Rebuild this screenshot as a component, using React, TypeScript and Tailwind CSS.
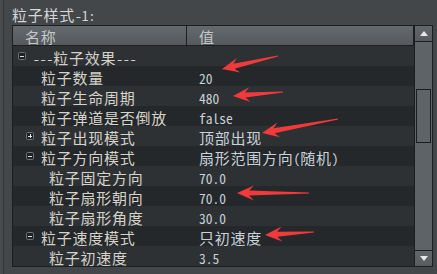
import React from "react";

type Row = { level: 0 | 1 | 2; box?: "+" | "-"; name: string; value: string };

const rows: Row[] = [
  { level: 0, box: "-", name: "---粒子效果---", value: "" },
  { level: 1, name: "粒子数量", value: "20" },
  { level: 1, name: "粒子生命周期", value: "480" },
  { level: 1, name: "粒子弹道是否倒放", value: "false" },
  { level: 1, box: "+", name: "粒子出现模式", value: "顶部出现" },
  { level: 1, box: "-", name: "粒子方向模式", value: "扇形范围方向(随机)" },
  { level: 2, name: "粒子固定方向", value: "70.0" },
  { level: 2, name: "粒子扇形朝向", value: "70.0" },
  { level: 2, name: "粒子扇形角度", value: "30.0" },
  { level: 1, box: "-", name: "粒子速度模式", value: "只初速度" },
  { level: 2, name: "粒子初速度", value: "3.5" },
];

const indent: Record<number, string> = { 0: "w-0", 1: "w-[8px]", 2: "w-[16px]" };

function Mixed({ text }: { text: string }) {
  const parts = text.split(/([\x00-\x7f]+)/).filter((p) => p.length > 0);
  return (
    <>
      {parts.map((p, i) =>
        /^[\x00-\x7f]+$/.test(p) ? (
          <span key={i} className="font-['Noto_Sans_Mono_CJK_SC','DejaVu_Sans_Mono',monospace] text-[13.5px]">
            {p}
          </span>
        ) : (
          <span key={i} className="tracking-[0.75px]">
            {p}
          </span>
        )
      )}
    </>
  );
}

function Box({ kind }: { kind: "+" | "-" }) {
  return (
    <div className="w-[8px] h-[8px] rounded-[1.5px] border border-[#6f7377] bg-[#1f2123] flex items-center justify-center relative">
      <div className="w-[4px] h-[1px] bg-[#e0e0e0]" />
      {kind === "+" && <div className="absolute w-[1px] h-[4px] bg-[#e0e0e0]" />}
    </div>
  );
}

function arrowPoints(tx: number, ty: number, ex: number, ey: number, headLen = 17, headHalf = 7.5, shaftHalf = 2.6, tailHalf = 0.5) {
  const dx = ex - tx;
  const dy = ey - ty;
  const len = Math.hypot(dx, dy);
  const ux = dx / len;
  const uy = dy / len;
  const nx = -uy;
  const ny = ux;
  const p = (a: number, b: number, s: number) => `${(tx + ux * a + nx * b * s).toFixed(1)},${(ty + uy * a + ny * b * s).toFixed(1)}`;
  const pts = [
    `${tx},${ty}`,
    p(headLen, headHalf, 1),
    p(headLen * 0.72, shaftHalf, 1),
    `${(ex + nx * tailHalf).toFixed(1)},${(ey + ny * tailHalf).toFixed(1)}`,
    `${(ex - nx * tailHalf).toFixed(1)},${(ey - ny * tailHalf).toFixed(1)}`,
    p(headLen * 0.72, shaftHalf, -1),
    p(headLen, headHalf, -1),
  ];
  return pts.join(" ");
}

const arrows: [number, number, number, number][] = [
  [222, 69, 278, 56],
  [233, 96, 283, 92],
  [262, 133, 338, 119],
  [237, 193, 309, 193],
  [265, 235, 314, 232],
];

export default function App() {
  return (
    <div className="w-[437px] h-[274px] bg-[#43474a] relative overflow-hidden flex font-['Noto_Sans_CJK_SC','Noto_Sans',sans-serif] text-[15px]">
      <div className="w-[3px] bg-[#474b4e] border-r border-[#35383b] box-content" />
      <div className="flex-1 flex flex-col pl-[8px]">
        <div className="h-[25px] text-[#d4d6d8] leading-[20px] pt-[5px] whitespace-nowrap">
          <Mixed text="粒子样式-1:" />
        </div>
        <div className="w-[421px] h-[242px] border border-[#1c1e20] flex">
          <div className="flex-1 flex flex-col min-w-0">
            <div className="h-[20px] flex border-b border-[#1c1e20] bg-gradient-to-b from-[#64696d] to-[#565a5e] text-[#c4c7c9] leading-[20px]">
              <div className="w-[174px] pl-[12px] pt-[1px] border-r border-[#1c1e20]">
                <Mixed text="名称" />
              </div>
              <div className="flex-1 pl-[12px] pt-[1px] border-r border-[#1c1e20]">值</div>
            </div>
            {rows.map((r, i) => (
              <div
                key={i}
                className={`h-[20px] flex items-center leading-[20px] whitespace-nowrap ${i % 2 === 0 ? "bg-[#2e3134]" : "bg-[#25282b]"}`}
              >
                <div className="w-[174px] pl-[5px] flex items-center text-[#d6d3ca]">
                  <div className={`shrink-0 ${indent[r.level]}`} />
                  <div className="w-[8px] h-[8px] mr-[7px] shrink-0">{r.box && <Box kind={r.box} />}</div>
                  <span className="pt-[3px]">
                    <Mixed text={r.name} />
                  </span>
                </div>
                <div className="flex-1 pl-[12px] pt-[3px] text-[#c8d2da]">
                  <Mixed text={r.value} />
                </div>
              </div>
            ))}
          </div>
          <div className="w-[18px] border-l border-[#1c1e20] flex flex-col bg-[#5e6367]">
            <div className="h-[16px] border-b border-[#1c1e20] bg-gradient-to-b from-[#62676b] to-[#585c60] flex items-center justify-center">
              <svg width="8" height="5" viewBox="0 0 8 5"><polygon points="4,0 8,5 0,5" fill="#e8e8e8" /></svg>
            </div>
            <div className="flex-1 flex flex-col px-[1px]">
              <div className="h-[47px]" />
              <div className="h-[54px] border border-[#1c1e20] bg-[#5e6367]" />
            </div>
            <div className="h-[16px] border-t border-[#1c1e20] bg-gradient-to-b from-[#62676b] to-[#585c60] flex items-center justify-center">
              <svg width="8" height="5" viewBox="0 0 8 5"><polygon points="0,0 8,0 4,5" fill="#e8e8e8" /></svg>
            </div>
          </div>
        </div>
      </div>
      <svg className="absolute left-0 top-0 pointer-events-none" width="437" height="274" viewBox="0 0 437 274">
        {arrows.map((a, i) => (
          <polygon key={i} points={arrowPoints(a[0], a[1], a[2], a[3])} fill="#f23a3a" />
        ))}
      </svg>
    </div>
  );
}
